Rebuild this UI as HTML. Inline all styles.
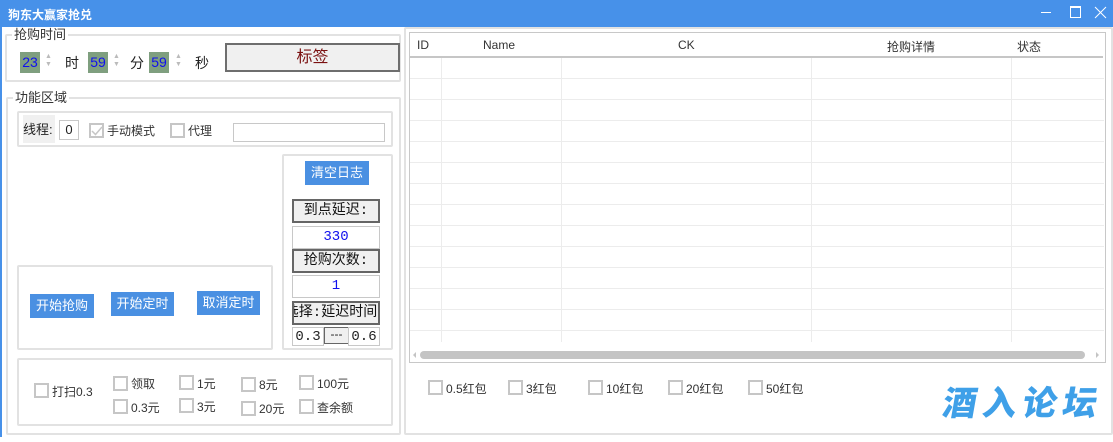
<!DOCTYPE html>
<html><head><meta charset="utf-8"><style>
*{margin:0;padding:0;box-sizing:border-box}
body{width:1113px;height:442px;background:#fff;position:relative;overflow:hidden;font-family:"Liberation Sans","Noto Sans CJK SC",sans-serif;font-size:12px;color:#222}
.a{position:absolute}
.box{position:absolute;border:2px solid #e2e2e2;border-radius:2px}
.lg{position:absolute;background:#fff;padding:0 2px;font-size:13px;color:#333;line-height:14px}
.btn{position:absolute;background:#4a90e2;color:#fff;font-size:13px;text-align:center}
.cb{position:absolute;width:15px;height:15px;border:2px solid #c6c6c6;background:#fff}
.lb{position:absolute;font-size:12px;color:#333;line-height:15px}
.gb{position:absolute;background:#f0f0f0;border:2px solid #666;font-size:14px;text-align:center;line-height:20px;font-family:"Liberation Mono","Noto Sans CJK SC",monospace;color:#111;overflow:hidden;white-space:nowrap}
.wb{position:absolute;background:#fff;border:1px solid #c8c8c8;font-size:14px;text-align:center;line-height:21px;font-family:"Liberation Mono",monospace}
.num{position:absolute;background:#7f9f7f;color:#1010ee;font-size:14px;line-height:21px;text-align:center;height:21px}
.spin{position:absolute;color:#bbb;font-size:7px;line-height:8px}
.hl{position:absolute;left:410px;width:694px;height:1px;background:#ececec}
.vl{position:absolute;top:58px;height:284px;width:1px;background:#ececec}
</style></head><body>
<div class="a" style="left:0;top:0;width:1113px;height:27px;background:#4791e9"></div>
<div class="a" style="left:8px;top:6px;color:#fff;font-size:12px;font-weight:bold">狗东大赢家抢兑</div>
<div class="a" style="left:1041px;top:12px;width:10px;height:1px;background:#fff"></div>
<div class="a" style="left:1070px;top:6px;width:11px;height:12px;border:1px solid #fff;border-top-width:2px"></div>
<svg class="a" style="left:1094px;top:6px" width="13" height="13"><path d="M1 1L12 12M12 1L1 12" stroke="#fff" stroke-width="1"/></svg>
<div class="a" style="left:0;top:27px;width:2px;height:410px;background:#4791e9"></div>

<div class="box" style="left:5px;top:34px;width:396px;height:48px"></div>
<div class="lg" style="left:12px;top:28px">抢购时间</div>
<div class="num" style="left:20px;top:52px;width:20px">23</div>
<div class="spin" style="left:45px;top:53px">▲<br>▼</div>
<div class="a" style="left:65px;top:53px;font-size:14px">时</div>
<div class="num" style="left:88px;top:52px;width:20px">59</div>
<div class="spin" style="left:113px;top:53px">▲<br>▼</div>
<div class="a" style="left:130px;top:53px;font-size:14px">分</div>
<div class="num" style="left:149px;top:52px;width:20px">59</div>
<div class="spin" style="left:175px;top:53px">▲<br>▼</div>
<div class="a" style="left:195px;top:53px;font-size:14px">秒</div>
<div class="a" style="left:225px;top:43px;width:175px;height:29px;background:#f0f0f0;border:2px solid #6e6e6e;color:#7a1010;font-size:16px;text-align:center;line-height:25px">标签</div>

<div class="box" style="left:6px;top:97px;width:395px;height:338px"></div>
<div class="lg" style="left:13px;top:91px">功能区域</div>
<div class="box" style="left:17px;top:111px;width:376px;height:36px"></div>
<div class="a" style="left:23px;top:115px;width:32px;height:28px;background:#f0f0f0;font-size:13px;line-height:30px">线程:</div>
<div class="a" style="left:59px;top:120px;width:20px;height:20px;border:1px solid #c8c8c8;text-align:center;line-height:18px;font-size:13px">0</div>
<div class="cb" style="left:89px;top:123px"></div>
<svg class="a" style="left:91px;top:125px" width="12" height="12"><path d="M1 6L4.5 9.5L11 2" stroke="#c6c6c6" stroke-width="1.5" fill="none"/></svg>
<div class="lb" style="left:107px;top:124px">手动模式</div>
<div class="cb" style="left:170px;top:123px"></div>
<div class="lb" style="left:188px;top:124px">代理</div>
<div class="a" style="left:233px;top:123px;width:152px;height:19px;border:1px solid #c8c8c8"></div>

<div class="box" style="left:282px;top:154px;width:111px;height:196px"></div>
<div class="btn" style="left:305px;top:161px;width:64px;height:24px;line-height:24px">清空日志</div>
<div class="gb" style="left:292px;top:199px;width:88px;height:24px">到点延迟:</div>
<div class="wb" style="left:292px;top:226px;width:88px;height:23px;color:#1010ee">330</div>
<div class="gb" style="left:292px;top:249px;width:88px;height:24px">抢购次数:</div>
<div class="wb" style="left:292px;top:275px;width:88px;height:23px;color:#1010ee">1</div>
<div class="gb" style="left:292px;top:301px;width:88px;height:24px;text-indent:-10px">选择:延迟时间</div>
<div class="wb" style="left:292px;top:327px;width:32px;height:19px;line-height:18px">0.3</div>
<div class="a" style="left:324px;top:327px;width:25px;height:17px;background:#f0f0f0;border:1px solid #666;text-align:center;line-height:13px;font-size:12px">---</div>
<div class="wb" style="left:348px;top:327px;width:32px;height:19px;line-height:18px">0.6</div>

<div class="box" style="left:17px;top:265px;width:256px;height:85px"></div>
<div class="btn" style="left:30px;top:294px;width:64px;height:24px;line-height:24px">开始抢购</div>
<div class="btn" style="left:111px;top:292px;width:63px;height:24px;line-height:24px">开始定时</div>
<div class="btn" style="left:197px;top:291px;width:63px;height:24px;line-height:24px">取消定时</div>

<div class="box" style="left:17px;top:358px;width:376px;height:68px"></div>
<div class="cb" style="left:34px;top:383px"></div><div class="lb" style="left:52px;top:385px">打扫0.3</div>
<div class="cb" style="left:113px;top:376px"></div><div class="lb" style="left:131px;top:377px">领取</div>
<div class="cb" style="left:179px;top:375px"></div><div class="lb" style="left:197px;top:377px">1元</div>
<div class="cb" style="left:241px;top:377px"></div><div class="lb" style="left:259px;top:378px">8元</div>
<div class="cb" style="left:299px;top:375px"></div><div class="lb" style="left:317px;top:377px">100元</div>
<div class="cb" style="left:113px;top:399px"></div><div class="lb" style="left:131px;top:401px">0.3元</div>
<div class="cb" style="left:179px;top:398px"></div><div class="lb" style="left:197px;top:400px">3元</div>
<div class="cb" style="left:241px;top:401px"></div><div class="lb" style="left:259px;top:402px">20元</div>
<div class="cb" style="left:299px;top:399px"></div><div class="lb" style="left:317px;top:401px">查余额</div>

<div class="box" style="left:404px;top:27px;width:709px;height:408px"></div>
<div class="a" style="left:409px;top:32px;width:697px;height:331px;border:1px solid #c8c8c8"></div>
<div class="a" style="left:417px;top:38px;font-size:12px;color:#333">ID</div>
<div class="a" style="left:483px;top:38px;font-size:12px;color:#333">Name</div>
<div class="a" style="left:678px;top:38px;font-size:12px;color:#333">CK</div>
<div class="a" style="left:887px;top:38px;font-size:12px;color:#333">抢购详情</div>
<div class="a" style="left:1017px;top:38px;font-size:12px;color:#333">状态</div>
<div class="a" style="left:410px;top:56px;width:693px;height:2px;background:#c6c6c6"></div>
<div class="vl" style="left:441px"></div><div class="vl" style="left:561px"></div><div class="vl" style="left:811px"></div><div class="vl" style="left:1011px"></div>
<div class="hl" style="top:78px"></div><div class="hl" style="top:99px"></div><div class="hl" style="top:120px"></div><div class="hl" style="top:141px"></div><div class="hl" style="top:162px"></div><div class="hl" style="top:183px"></div><div class="hl" style="top:204px"></div><div class="hl" style="top:225px"></div><div class="hl" style="top:246px"></div><div class="hl" style="top:267px"></div><div class="hl" style="top:288px"></div><div class="hl" style="top:309px"></div><div class="hl" style="top:330px"></div>
<div class="a" style="left:420px;top:351px;width:665px;height:8px;border-radius:4px;background:#c4c4c4"></div>
<div class="a" style="left:413px;top:352px;width:0;height:0;border-top:3px solid transparent;border-bottom:3px solid transparent;border-right:3px solid #c4c4c4"></div>
<div class="a" style="left:1096px;top:352px;width:0;height:0;border-top:3px solid transparent;border-bottom:3px solid transparent;border-left:3px solid #c4c4c4"></div>

<div class="cb" style="left:428px;top:380px"></div><div class="lb" style="left:446px;top:382px">0.5红包</div>
<div class="cb" style="left:508px;top:380px"></div><div class="lb" style="left:526px;top:382px">3红包</div>
<div class="cb" style="left:588px;top:380px"></div><div class="lb" style="left:606px;top:382px">10红包</div>
<div class="cb" style="left:668px;top:380px"></div><div class="lb" style="left:686px;top:382px">20红包</div>
<div class="cb" style="left:748px;top:380px"></div><div class="lb" style="left:766px;top:382px">50红包</div>

<div class="a" style="left:940px;top:381px;font-size:34px;font-weight:900;color:#3fa0e8;letter-spacing:6px;line-height:40px;font-family:'Noto Sans CJK SC',sans-serif;transform:skewX(-10deg);transform-origin:left bottom">酒入论坛</div>
</body></html>
